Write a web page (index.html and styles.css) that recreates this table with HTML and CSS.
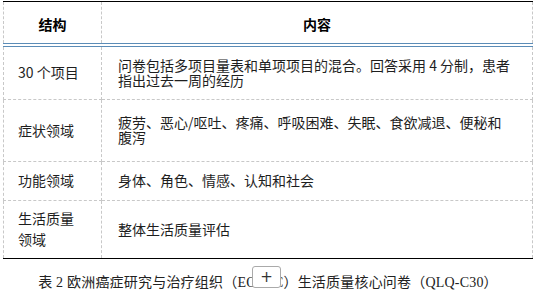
FILE: index.html
```html
<!DOCTYPE html>
<html lang="zh">
<head>
<meta charset="utf-8">
<link rel="stylesheet" href="styles.css">
</head>
<body>
<div class="figure">
  <table class="qtable">
    <colgroup><col class="c1"><col class="c2"></colgroup>
    <thead>
      <tr class="r-head"><th>结构</th><th>内容</th></tr>
    </thead>
    <tbody>
      <tr class="r1"><td class="k">30 个项目</td><td>问卷包括多项目量表和单项项目的混合。回答采用 4 分制，患者指出过去一周的经历</td></tr>
      <tr class="r2"><td class="k">症状领域</td><td>疲劳、恶心/呕吐、疼痛、呼吸困难、失眠、食欲减退、便秘和腹泻</td></tr>
      <tr class="r3"><td class="k">功能领域</td><td>身体、角色、情感、认知和社会</td></tr>
      <tr class="r4"><td class="k tall">生活质量领域</td><td>整体生活质量评估</td></tr>
    </tbody>
  </table>
  <p class="caption">表 2 欧洲癌症研究与治疗组织（EORTC）生活质量核心问卷（QLQ-C30）</p>
  <button class="zoom-btn" type="button">+</button>
</div>
</body>
</html>
```

FILE: styles.css
```css
html, body {
  margin: 0;
  padding: 0;
  background: #fff;
}
.figure {
  position: relative;
  padding: 1px 2px 0 3px;
  font-family: "Noto Sans CJK SC", "Liberation Sans", sans-serif;
  color: #1e1e1e;
}
.qtable {
  width: 530px;
  border-collapse: collapse;
  table-layout: fixed;
  font-size: 14px;
  line-height: 15px;
  border-top: 1px solid #000;
  border-bottom: 1px solid #000;
}
.c1 { width: 98px; }
.qtable th, .qtable td {
  border-left: 1px dashed #c8c8c8;
  border-right: 1px dashed #c8c8c8;
  border-bottom: 1px dashed #c8c8c8;
  vertical-align: middle;
  padding: 0 21px 0 16px;
}
.qtable th {
  font-weight: bold;
  color: #000;
  text-align: center;
  border-bottom: 4px double #5b8cb7;
  height: 38px;
  padding: 3px 0 0;
}
.qtable td { text-align: left; }
.qtable td.k { padding-left: 14px; padding-right: 14px; }
.qtable td.tall { line-height: 21px; padding-right: 20px; }
.r1 { height: 54px; }
.r2 { height: 62px; }
.r3 { height: 39px; }
.r4 { height: 58px; }
.r4 td { border-bottom: 1px solid #000; }
.caption {
  margin: 16px 0 0;
  width: 530px;
  text-align: center;
  font-family: "Liberation Serif", "Noto Sans CJK SC", serif;
  font-size: 14px;
  line-height: 16px;
  letter-spacing: 0.2px;
  color: #222;
}
.zoom-btn {
  position: absolute;
  left: 252px;
  top: 266px;
  width: 29px;
  height: 22px;
  padding: 0;
  border: 1px solid #aaa;
  border-radius: 3px;
  background: #fff;
  font-family: "DejaVu Sans", sans-serif;
  font-size: 15px;
  line-height: 18px;
  color: #333;
}
```
